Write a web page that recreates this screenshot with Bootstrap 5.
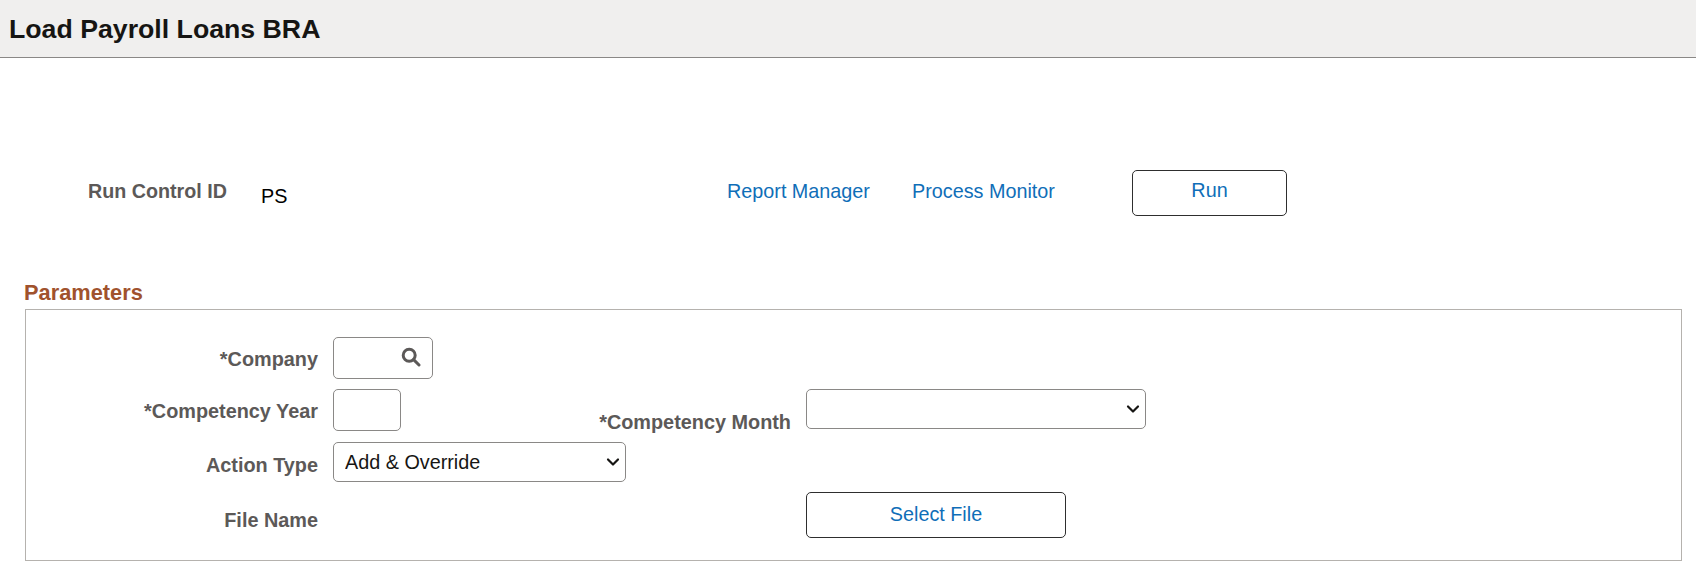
<!doctype html>
<html lang="en">
<head>
<meta charset="utf-8">
<title>Load Payroll Loans BRA</title>
<link href="https://cdn.jsdelivr.net/npm/bootstrap@5.3.0/dist/css/bootstrap.min.css" rel="stylesheet">
<style>
html,body{height:573px;overflow:hidden}
body{font-family:"Liberation Sans",Arial,sans-serif;font-size:19.8px;color:#000;background:#fff}
.ps-head{height:58px;background:#f0efee;border-bottom:1px solid #8a8886;padding:13px 0 0 9px}
.ps-title{font-size:26.7px;font-weight:700;line-height:32px;color:#161513;margin:0}
.run-row{margin-top:112px;height:46px;padding-left:88px}
.ps-label{font-weight:700;font-size:19.7px;color:#5c5958;line-height:24px}
.run-label{width:173px;padding-top:9px}
.run-value{width:466px;padding-top:14px;line-height:24px}
.ps-link{color:#0f6eb8;text-decoration:none;line-height:24px;padding-top:9px}
.link-a{width:185px}
.link-b{width:220px}
.ps-btn{--bs-btn-color:#0f6eb8;--bs-btn-border-color:#2e2e2e;--bs-btn-bg:#fff;--bs-btn-hover-color:#0f6eb8;--bs-btn-hover-bg:#fff;--bs-btn-hover-border-color:#2e2e2e;--bs-btn-font-size:19.8px;--bs-btn-border-radius:5px;padding:0}
.btn-run{width:155px;height:46px;padding-bottom:4px}
.sect-title{font-size:21.8px;font-weight:700;color:#a0522d;line-height:24px;margin:65px 0 4px 24px}
.param-box{margin:0 14px 0 25px;height:252px;border:1px solid #b5b2ae;padding-top:27px}
.f-row{display:flex;align-items:flex-start}
.f-label{width:292px;text-align:right;margin-right:15px;flex:none;font-size:19.85px}
.lbl-month{width:390px;margin-top:21px}
.ps-input{border:1px solid #8a8886;border-radius:5px;background:#fff;height:42px;font-size:19.8px;padding:0 12px}
.in-company{width:100px;position:relative}
.in-year{width:68px}
.srch{position:absolute;right:11px;top:9px;width:20px;height:20px}
.ps-select{border-color:#8a8886;border-radius:5px;height:40px;font-size:19.8px;line-height:24px;padding:0 30px 0 11px;color:#161513;background-image:url("data:image/svg+xml,%3csvg xmlns='http://www.w3.org/2000/svg' viewBox='0 0 14 10'%3e%3cpath fill='none' stroke='%23161513' stroke-width='2.2' stroke-linecap='round' stroke-linejoin='round' d='M2 2.5 7 7.5 12 2.5'/%3e%3c/svg%3e");background-position:right 5px center;background-size:14px 10px}
.sel-action{width:293px}
.sel-month{width:340px}
.row-1{height:52px}
.row-2{height:53px}
.row-3{height:50px}
.row-1 .f-label{margin-top:10px}
.row-2 .first{margin-top:10px}
.row-3 .f-label{margin-top:11px}
.row-4 .f-label{margin-top:16px}
.btn-file{width:260px;height:46px;margin-left:473px;padding-bottom:1px}
</style>
</head>
<body>
<header class="ps-head"><h1 class="ps-title">Load Payroll Loans BRA</h1></header>
<div class="d-flex run-row">
  <div class="ps-label run-label">Run Control ID</div>
  <div class="run-value">PS</div>
  <a href="#" class="ps-link link-a">Report Manager</a>
  <a href="#" class="ps-link link-b">Process Monitor</a>
  <button type="button" class="btn ps-btn btn-run">Run</button>
</div>
<div class="sect-title">Parameters</div>
<section class="param-box">
  <div class="f-row row-1">
    <div class="ps-label f-label">*Company</div>
    <div class="ps-input in-company"><svg class="srch" viewBox="0 0 20 20" fill="none" stroke="#5c5958" stroke-width="3"><circle cx="8.2" cy="8.2" r="6"/><path d="M12.6 12.6 18 18" stroke-linecap="round"/></svg></div>
  </div>
  <div class="f-row row-2">
    <div class="ps-label f-label first">*Competency Year</div>
    <input class="ps-input in-year" type="text" aria-label="Competency Year">
    <div class="ps-label f-label lbl-month">*Competency Month</div>
    <select class="form-select ps-select sel-month" aria-label="Competency Month"><option></option></select>
  </div>
  <div class="f-row row-3">
    <div class="ps-label f-label">Action Type</div>
    <select class="form-select ps-select sel-action" aria-label="Action Type"><option>Add &amp; Override</option></select>
  </div>
  <div class="f-row row-4">
    <div class="ps-label f-label">File Name</div>
    <button type="button" class="btn ps-btn btn-file">Select File</button>
  </div>
</section>
</body>
</html>
